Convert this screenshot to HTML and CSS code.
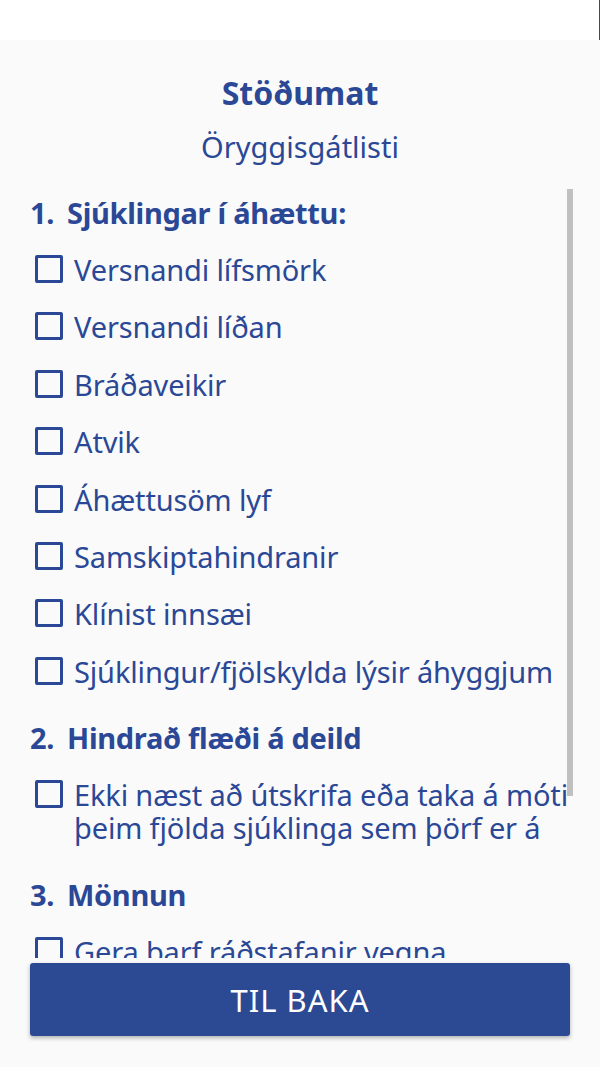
FILE: index.html
```html
<!DOCTYPE html>
<html lang="is">
<head>
<meta charset="utf-8">
<title>Stöðumat</title>
<link rel="stylesheet" href="styles.css">
</head>
<body>
<div class="statusbar"><span class="edge"></span></div>
<main class="screen">
  <h1 class="title">Stöðumat</h1>
  <p class="subtitle">Öryggisgátlisti</p>
  <div class="scroller">
    <section class="group">
      <h2 class="group-head"><span class="num">1.</span><span>Sjúklingar í áhættu:</span></h2>
      <label class="item"><span class="box"></span><span class="text">Versnandi lífsmörk</span></label>
      <label class="item"><span class="box"></span><span class="text">Versnandi líðan</span></label>
      <label class="item"><span class="box"></span><span class="text">Bráðaveikir</span></label>
      <label class="item"><span class="box"></span><span class="text">Atvik</span></label>
      <label class="item"><span class="box"></span><span class="text">Áhættusöm lyf</span></label>
      <label class="item"><span class="box"></span><span class="text">Samskiptahindranir</span></label>
      <label class="item"><span class="box"></span><span class="text">Klínist innsæi</span></label>
      <label class="item"><span class="box"></span><span class="text">Sjúklingur/fjölskylda lýsir áhyggjum</span></label>
    </section>
    <section class="group">
      <h2 class="group-head"><span class="num">2.</span><span>Hindrað flæði á deild</span></h2>
      <label class="item"><span class="box"></span><span class="text">Ekki næst að útskrifa eða taka á móti þeim fjölda sjúklinga sem þörf er á</span></label>
    </section>
    <section class="group">
      <h2 class="group-head"><span class="num">3.</span><span>Mönnun</span></h2>
      <label class="item"><span class="box"></span><span class="text">Gera þarf ráðstafanir vegna mönnunar</span></label>
    </section>
    <div class="thumb"></div>
  </div>
  <div class="footer">
    <button class="back" type="button">TIL BAKA</button>
  </div>
</main>
</body>
</html>
```
FILE: styles.css
```css
* { box-sizing: border-box; }
html, body { margin: 0; padding: 0; }
body {
  width: 600px;
  height: 1067px;
  overflow: hidden;
  background: #fafafa;
  font-family: "Noto Sans", "Open Sans", sans-serif;
  color: #2a4896;
}
.statusbar {
  height: 40px;
  background: #ffffff;
  display: flex;
  justify-content: flex-end;
}
.edge {
  width: 1px;
  height: 40px;
  background: #2a4896;
}
.screen {
  display: flex;
  flex-direction: column;
  height: 1027px;
}
.title {
  margin: 0;
  padding-top: 33px;
  font-size: 32px;
  line-height: 40px;
  font-weight: 700;
  text-align: center;
}
.subtitle {
  margin: 17px 0 0;
  font-size: 29px;
  line-height: 34px;
  text-align: center;
}
.scroller {
  position: relative;
  margin-top: 20px;
  height: 774px;
  overflow: hidden;
  padding: 0 20px 0 30px;
}
.group + .group { margin-top: 9px; }
.group-head {
  margin: 0;
  display: flex;
  padding: 12px 0;
  font-size: 29px;
  line-height: 33px;
  font-weight: 700;
  letter-spacing: -0.3px;
}
.num { width: 37px; flex: none; }
.item {
  display: flex;
  align-items: flex-start;
  gap: 11px;
  padding: 12px 0 12.4px 5px;
  font-size: 29px;
  line-height: 33px;
  letter-spacing: -0.15px;
}
.box {
  flex: none;
  width: 28px;
  height: 28px;
  margin-top: 2px;
  border: 3px solid #2a4896;
  border-radius: 2px;
}
.thumb {
  position: absolute;
  top: 5px;
  left: 567px;
  width: 6px;
  height: 607px;
  background: #c0c0c0;
}
.footer {
  padding: 5px 30px 0;
}
.back {
  width: 540px;
  height: 73px;
  border: none;
  border-radius: 3px;
  background: #2c4a94;
  color: #ffffff;
  font-family: "Noto Sans", "Open Sans", sans-serif;
  font-size: 31px;
  letter-spacing: 1px;
  box-shadow: 0 2px 4px rgba(0, 0, 0, 0.3);
}
```
